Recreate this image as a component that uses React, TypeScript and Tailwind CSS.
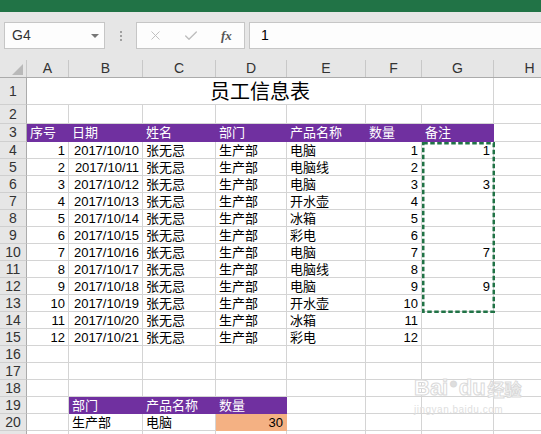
import React from 'react';
import { X, Check } from 'lucide-react';

type Cell = { t?: string; r?: boolean; fill?: string };

const colW = ['w-[42px]', 'w-[74px]', 'w-[73px]', 'w-[71px]', 'w-[79px]', 'w-[56px]', 'w-[72px]'];
const letters = ['A', 'B', 'C', 'D', 'E', 'F', 'G'];

const PURPLE = 'bg-[#7030a0] border-[#7030a0] text-white';
const SALMON = 'bg-[#f4b183] border-[#f4b183]';

const products = ['电脑', '电脑线', '电脑', '开水壶', '冰箱', '彩电', '电脑', '电脑线', '电脑', '开水壶', '冰箱', '彩电'];
const notes: Record<number, string> = { 1: '1', 3: '3', 7: '7', 9: '9' };

const dataRows: Cell[][] = products.map((p, i) => [
    { t: String(i + 1), r: true },
    { t: `2017/10/${10 + i}`, r: true },
    { t: '张无忌' },
    { t: '生产部' },
    { t: p },
    { t: String(i + 1), r: true },
    { t: notes[i + 1] ?? '', r: true },
]);

const headerRow: Cell[] = ['序号', '日期', '姓名', '部门', '产品名称', '数量', '备注'].map(t => ({ t, fill: PURPLE }));
const empty: Cell[] = Array.from({ length: 7 }, () => ({}));

const RowHead: React.FC<{ n?: number }> = ({ n }) => (
    <div className="w-[27px] shrink-0 h-full bg-[#e6e6e6] border-r border-r-[#ababab] border-b border-b-[#cfcfcf] flex items-center justify-center text-[14px] text-[#333]">
        {n}
    </div>
);

const SheetRow: React.FC<{ n?: number; h: string; cells: Cell[] }> = ({ n, h, cells }) => (
    <div className={`flex ${h}`}>
        <RowHead n={n} />
        {cells.map((c, i) => (
            <div
                key={i}
                className={`${colW[i]} shrink-0 h-full border-r border-b px-[3px] leading-[17px] whitespace-nowrap overflow-hidden ${c.fill ?? 'border-[#d4d4d4]'} ${c.r ? 'text-right' : ''}`}
            >
                {c.t}
            </div>
        ))}
        <div className="w-[72px] shrink-0 h-full border-r border-b border-[#d4d4d4]" />
    </div>
);

export default function App() {
    return (
        <div className="w-[541px] h-[434px] overflow-hidden bg-white text-black relative" style={{ fontFamily: '"Liberation Sans", "Noto Sans CJK SC", sans-serif' }}>
            <div className="h-[12px] bg-[#217346]" />

            {/* formula bar */}
            <div className="h-[48px] bg-[#e6e6e6] flex items-start pt-[10px] pl-[4px]">
                <div className="w-[101px] h-[27px] bg-[#fdfdfd] border border-[#c6c6c6] flex items-center justify-between pl-[7px] pr-[5px]">
                    <span className="text-[14px] text-[#333]">G4</span>
                    <span className="w-0 h-0 border-l-[4px] border-r-[4px] border-t-[4px] border-l-transparent border-r-transparent border-t-[#777]" />
                </div>
                <div className="w-[31px] h-[27px] flex flex-col items-center justify-center gap-[2px]">
                    <span className="w-[2px] h-[2px] bg-[#a0a0a0]" />
                    <span className="w-[2px] h-[2px] bg-[#a0a0a0]" />
                    <span className="w-[2px] h-[2px] bg-[#a0a0a0]" />
                </div>
                <div className="w-[109px] h-[27px] bg-[#fdfdfd] border border-[#c6c6c6] flex items-center pl-[11px] gap-[20px]">
                    <X size={15} strokeWidth={1.5} className="text-[#bdbdbd]" />
                    <Check size={16} strokeWidth={2} className="text-[#bdbdbd]" />
                    <span className="italic font-bold text-[13px] text-[#555] ml-[2px]" style={{ fontFamily: '"Liberation Serif", serif' }}>fx</span>
                </div>
                <div className="ml-[4px] flex-1 h-[27px] bg-[#fdfdfd] border-y border-l border-[#c6c6c6] flex items-center pl-[11px] text-[14px]">
                    1
                </div>
            </div>

            {/* sheet */}
            <div className="text-[13px] w-[620px]">
                <div className="flex h-[18px] bg-[#e6e6e6] border-b border-[#ababab] text-[14px] text-[#333]">
                    <div className="w-[27px] shrink-0 h-full relative border-r border-[#c8c8c8]">
                        <svg className="absolute right-[3px] bottom-[2px]" width="11" height="11">
                            <polygon points="11,0 11,11 0,11" fill="#b9b9b9" />
                        </svg>
                    </div>
                    {letters.map((l, i) => (
                        <div key={l} className={`${colW[i]} shrink-0 h-full border-r border-[#c8c8c8] flex items-center justify-center`}>
                            {l}
                        </div>
                    ))}
                    <div className="w-[72px] shrink-0 h-full border-r border-[#c8c8c8] flex items-center justify-center">H</div>
                </div>

                <div className="flex h-[27px]">
                    <RowHead n={1} />
                    <div className="w-[467px] shrink-0 h-full border-r border-b border-[#d4d4d4] flex items-end justify-center text-[20px] leading-[23px]">
                        员工信息表
                    </div>
                    <div className="w-[72px] shrink-0 h-full border-r border-b border-[#d4d4d4]" />
                </div>
                <SheetRow n={2} h="h-[19px]" cells={empty} />
                <SheetRow n={3} h="h-[18px]" cells={headerRow} />
                {dataRows.map((cells, i) => (
                    <SheetRow key={i} n={i + 4} h="h-[17px]" cells={cells} />
                ))}
                <SheetRow n={16} h="h-[17px]" cells={empty} />
                <SheetRow n={17} h="h-[17px]" cells={empty} />
                <SheetRow n={18} h="h-[17px]" cells={empty} />
                <SheetRow
                    n={19}
                    h="h-[17px]"
                    cells={[{}, { t: '部门', fill: PURPLE }, { t: '产品名称', fill: PURPLE }, { t: '数量', fill: PURPLE }, {}, {}, {}]}
                />
                <SheetRow
                    n={20}
                    h="h-[17px]"
                    cells={[{}, { t: '生产部' }, { t: '电脑' }, { t: '30', r: true, fill: SALMON }, {}, {}, {}]}
                />
                <SheetRow h="h-[17px]" cells={empty} />
            </div>

            {/* copy marquee G4:G13 */}
            <svg className="absolute left-[422px] top-[142px]" width="73" height="171">
                <rect x="1.25" y="1.25" width="70.5" height="168.5" fill="none" stroke="#217346" strokeWidth="2.5" strokeDasharray="4.5 2.5" />
            </svg>

            {/* watermark */}
            <div className="absolute left-[414px] top-[376px] flex flex-col items-start pointer-events-none select-none">
                <div className="flex items-end font-bold text-[22px] leading-none text-white [-webkit-text-stroke:1px_#dadada]">
                    <span>Bai</span>
                    <span className="text-[#dedede] text-[14px] mx-[1px] mb-[9px]">●</span>
                    <span>du</span>
                    <span className="ml-[2px] text-[17px]">经验</span>
                </div>
                <span className="text-[10px] text-[#e0e0e0] mt-[3px] tracking-[0.5px]">jingyan.baidu.com</span>
            </div>
        </div>
    );
}
